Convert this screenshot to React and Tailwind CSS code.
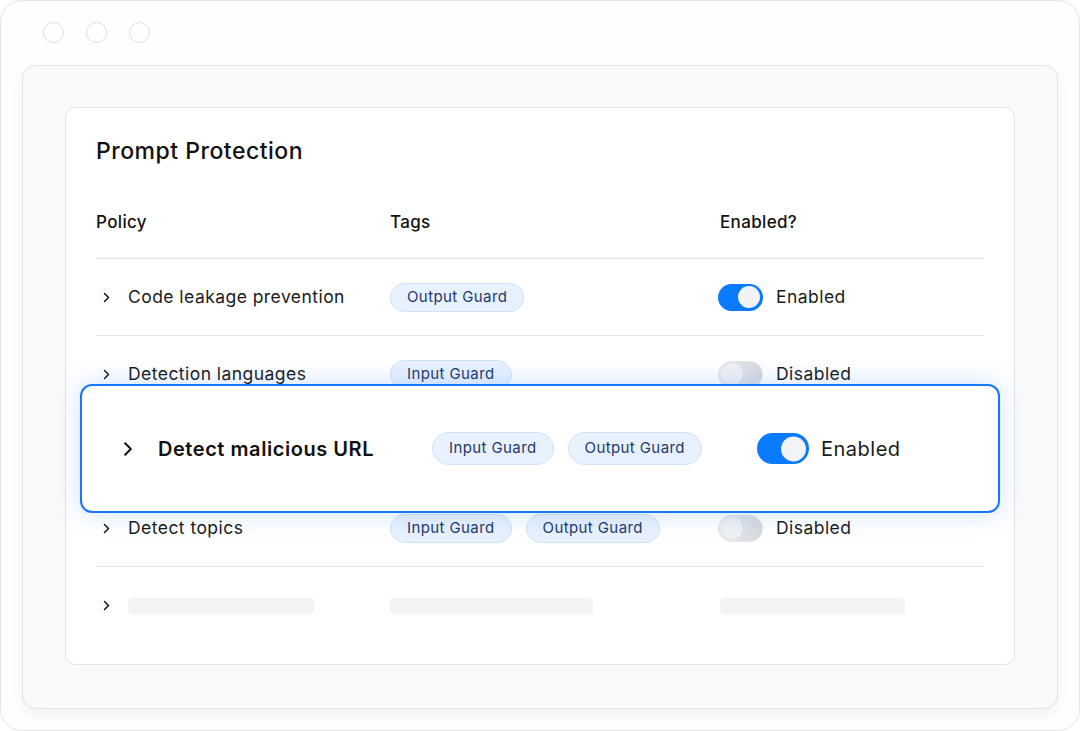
import { useState } from "react";

const rows = [
    { id: 1, name: "Code leakage prevention", tags: ["Output Guard"], enabled: true },
    { id: 2, name: "Detection languages", tags: ["Input Guard"], enabled: false },
    { id: 3, name: "Detect malicious URL", tags: ["Input Guard", "Output Guard"], enabled: true, featured: true },
    { id: 4, name: "Detect topics", tags: ["Input Guard", "Output Guard"], enabled: false },
];

const Chevron = ({ big }) => (
    <svg
        className={big ? "w-[10px] h-[16px]" : "w-[7px] h-[11px]"}
        viewBox="0 0 7 11"
        fill="none"
    >
        <path d="M1.5 1.5L5.5 5.5L1.5 9.5" stroke="#111" strokeWidth={big ? 1.4 : 1.5} strokeLinecap="round" strokeLinejoin="round" />
    </svg>
);

const Tag = ({ label, big }) => (
    <span
        className={`inline-flex items-center rounded-full border border-[#cfe1fb] bg-[#e8f1fe] text-[#1d3a6b] text-[15px] tracking-[0.4px] px-[16px] ${big ? "h-[33px]" : "h-[29px]"}`}
    >
        {label}
    </span>
);

const Toggle = ({ on, big, onClick }) => (
    <button
        onClick={onClick}
        className={`relative rounded-full shrink-0 ${big ? "w-[52px] h-[31px]" : "w-[45px] h-[27px] -ml-[2px]"} ${on ? "bg-[#0a7aff]" : "bg-gradient-to-r from-[#eceef1] to-[#d5d8de] border border-[#e0e2e6]"}`}
    >
        <span
            className={`absolute top-1/2 -translate-y-1/2 rounded-full ${big ? "w-[25px] h-[25px]" : "w-[22px] h-[22px]"} ${on ? "right-[3px] bg-[#f2f3f5]" : "left-[2px] bg-[#eff0f2] shadow-[0_0_2px_rgba(0,0,0,0.08)]"}`}
        />
    </button>
);

const App = () => {
    const [state, setState] = useState(rows);

    const flip = (id) => {
        setState(state.map((r) => (r.id === id ? { ...r, enabled: !r.enabled } : r)));
    };

    const featured = state.find((r) => r.featured);

    return (
        <div className="w-[1080px] h-[731px] bg-white" style={{ fontFamily: "Inter, 'Noto Sans', sans-serif" }}>
            <div className="h-full w-full rounded-[22px] border border-[#e4e4ea] bg-[#fefefe] flex flex-col">
                <div className="flex gap-[22px] pl-[42px] pt-[21px] h-[64px] shrink-0">
                    <span className="w-[21px] h-[21px] rounded-full border-[1.5px] border-[#dcdce4]"></span>
                    <span className="w-[21px] h-[21px] rounded-full border-[1.5px] border-[#dcdce4]"></span>
                    <span className="w-[21px] h-[21px] rounded-full border-[1.5px] border-[#dcdce4]"></span>
                </div>

                <div className="mx-[21px] h-[644px] rounded-[14px] border border-[#e2e2e8] bg-[#fafafa] shadow-[0_6px_14px_rgba(0,0,0,0.05)] px-[42px] pt-[41px]">
                    <div className="relative h-[558px] rounded-[10px] border border-[#e2e2e8] bg-white px-[30px] pt-[28px]">
                        <h5 className="h-[30px] flex items-center text-[23px] font-medium text-[#111] tracking-[0.5px]">Prompt Protection</h5>

                        <div className="grid grid-cols-[294px_330px_1fr] pt-[44px] pb-[24px] text-[17px] leading-[24px] font-medium text-[#111] tracking-[0.35px]">
                            <div>Policy</div>
                            <div>Tags</div>
                            <div>Enabled?</div>
                        </div>

                        {
                            state.map((row) => (
                                <div key={row.id} className="grid grid-cols-[294px_330px_1fr] items-center h-[77px] border-t border-[#e3e3e8] text-[17.5px] text-[#1a1a1a] tracking-[0.45px]">
                                    {
                                        !row.featured && (
                                            <>
                                                <div className="flex items-center">
                                                    <span className="w-[32px] pl-[7px] flex items-center"><Chevron /></span>
                                                    <span>{row.name}</span>
                                                </div>
                                                <div className="flex items-center gap-[14px]">
                                                    {row.tags.map((t) => <Tag key={t} label={t} />)}
                                                </div>
                                                <div className="flex items-center gap-[13px]">
                                                    <Toggle on={row.enabled} onClick={() => flip(row.id)} />
                                                    <span>{row.enabled ? "Enabled" : "Disabled"}</span>
                                                </div>
                                            </>
                                        )
                                    }
                                </div>
                            ))
                        }

                        <div className="grid grid-cols-[294px_330px_1fr] items-center h-[78px] border-t border-[#e3e3e8]">
                            <div className="flex items-center">
                                <span className="w-[32px] pl-[7px] flex items-center"><Chevron /></span>
                                <span className="w-[186px] h-[16px] rounded-[4px] bg-[#f3f4f6]"></span>
                            </div>
                            <div><span className="block w-[203px] h-[16px] rounded-[4px] bg-[#f3f4f6]"></span></div>
                            <div><span className="block w-[185px] h-[16px] rounded-[4px] bg-[#f3f4f6]"></span></div>
                        </div>

                        {/* highlighted row floating above the table */}
                        <div className="absolute left-[14px] top-[276px] w-[920px] h-[129px] rounded-[12px] border-2 border-[#1677ff] bg-white shadow-[0_0_26px_rgba(30,120,255,0.22)] flex items-center pl-[41px]">
                            <span className="w-[35px] flex items-center"><Chevron big /></span>
                            <span className="w-[274px] text-[20px] font-semibold text-[#111] tracking-[0.55px]">{featured.name}</span>
                            <div className="w-[325px] flex items-center gap-[14px]">
                                {featured.tags.map((t) => <Tag key={t} label={t} big />)}
                            </div>
                            <div className="flex items-center gap-[12px] text-[20px] text-[#1a1a1a] tracking-[0.5px]">
                                <Toggle on={featured.enabled} big onClick={() => flip(featured.id)} />
                                <span>{featured.enabled ? "Enabled" : "Disabled"}</span>
                            </div>
                        </div>
                    </div>
                </div>
            </div>
        </div>
    );
}

export default App;
